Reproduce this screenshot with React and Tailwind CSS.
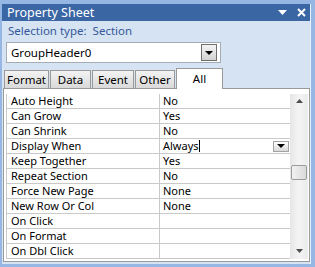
const rows = [
  { label: 'Auto Height', value: 'No' },
  { label: 'Can Grow', value: 'Yes' },
  { label: 'Can Shrink', value: 'No' },
  { label: 'Display When', value: 'Always', active: true },
  { label: 'Keep Together', value: 'Yes' },
  { label: 'Repeat Section', value: 'No' },
  { label: 'Force New Page', value: 'None' },
  { label: 'New Row Or Col', value: 'None' },
  { label: 'On Click', value: '' },
  { label: 'On Format', value: '' },
  { label: 'On Dbl Click', value: '' },
]

const tabs = [
  { label: 'Format', w: 'w-[45px]' },
  { label: 'Data', w: 'w-[41px]' },
  { label: 'Event', w: 'w-[42px]' },
  { label: 'Other', w: 'w-[40px]' },
]

const font = { fontFamily: '"Noto Sans", "DejaVu Sans", sans-serif' }

function ComboArrow() {
  return (
    <svg width="8" height="4" viewBox="0 0 8 4">
      <path d="M0 0h8L4 4z" fill="#000" />
    </svg>
  )
}

export default function App() {
  return (
    <div
      className="w-[315px] h-[267px] bg-[#96b7e4] pl-[2px] pr-[4px] pt-[4px] pb-[3px] overflow-hidden"
      style={font}
    >
      <div className="h-full bg-[#d5e3f3] border-r border-[#e8f0fa] flex flex-col">
        {/* Title bar */}
        <div className="h-[17px] bg-[#3a66a4] flex items-center pl-[5px] pr-[4px]">
          <span className="text-white text-[12.5px] leading-[17px]">Property Sheet</span>
          <div className="ml-auto flex items-center gap-[10px]">
            <svg width="9" height="5" viewBox="0 0 9 5">
              <path d="M0 0h9L4.5 5z" fill="#fff" />
            </svg>
            <svg width="9" height="9" viewBox="0 0 9 9">
              <path d="M1 1l7 7M8 1L1 8" stroke="#fff" strokeWidth="2" />
            </svg>
          </div>
        </div>

        {/* Selection type */}
        <div className="h-[18px] pl-[6px] pt-[2px] text-[11.5px] leading-[16px] text-[#35589a] whitespace-pre">
          Selection type:  Section
        </div>

        {/* Object combobox */}
        <div className="mt-[3px] ml-[4px] w-[215px] h-[21px] bg-white border border-[#a5acb5] flex items-center pl-[4px] pr-[3px]">
          <span className="text-[11.5px] leading-[16px] text-black">GroupHeader0</span>
          <div className="ml-auto w-[16px] h-[17px] border border-[#6f6f6f] bg-gradient-to-b from-[#f4f4f4] to-[#d2d2d2] flex items-center justify-center">
            <ComboArrow />
          </div>
        </div>

        {/* Tabs */}
        <div className="mt-[5px] ml-[2px] h-[20px] flex items-end">
          {tabs.map((t) => (
            <div
              key={t.label}
              className={`${t.w} h-[18px] mr-[1px] border border-b-0 border-[#9a9a9a] bg-gradient-to-b from-[#f3f3f3] to-[#d9d9d9] flex items-center justify-center text-[11.5px] leading-[16px] text-black`}
            >
              {t.label}
            </div>
          ))}
          <div className="relative z-10 w-[47px] h-[21px] -mb-[1px] border border-b-0 border-[#9a9a9a] bg-white flex items-center justify-center text-[11.5px] leading-[16px] text-black">
            All
          </div>
        </div>

        {/* Property grid */}
        <div className="ml-[1px] w-[307px] h-[174px] bg-white border border-[#9a9a9a] pl-[2px] pt-[5px] pb-[2px] pr-[1px] flex">
          <div className="w-[284px] border-l border-[#c9c9c9]">
            {rows.map((r) => (
              <div key={r.label} className="h-[15px] border-b border-[#c9c9c9] flex text-[11px] leading-[14px] text-black">
                <div className="w-[153px] pl-[4px] border-r border-[#c9c9c9] whitespace-nowrap">{r.label}</div>
                <div className="flex-1 pl-[3px] flex items-center">
                  <span className="leading-[14px] self-start">{r.value}</span>
                  {r.active && (
                    <>
                      <span className="w-[1px] h-[12px] bg-black self-start mt-[1px]" />
                      <div className="ml-auto mr-[1px] w-[16px] h-[11px] border border-[#a3a3a3] bg-gradient-to-b from-white to-[#d8d8d8] flex items-center justify-center">
                        <ComboArrow />
                      </div>
                    </>
                  )}
                </div>
              </div>
            ))}
          </div>

          {/* Scrollbar */}
          <div className="w-[18px] h-[165px] bg-gradient-to-r from-[#e6e6e6] via-[#f4f4f4] to-[#ebebeb] flex flex-col items-center">
            <svg width="7" height="4" viewBox="0 0 7 4" className="mt-[5px]">
              <path d="M0 4h7L3.5 0z" fill="#4d4d4d" />
            </svg>
            <div className="mt-[62px] w-[16px] h-[15px] rounded-[2px] border border-[#9c9c9c] bg-gradient-to-r from-[#f2f2f2] to-[#d9d9d9]" />
            <svg width="7" height="4" viewBox="0 0 7 4" className="mt-auto mb-[6px]">
              <path d="M0 0h7L3.5 4z" fill="#4d4d4d" />
            </svg>
          </div>
        </div>
      </div>
    </div>
  )
}
